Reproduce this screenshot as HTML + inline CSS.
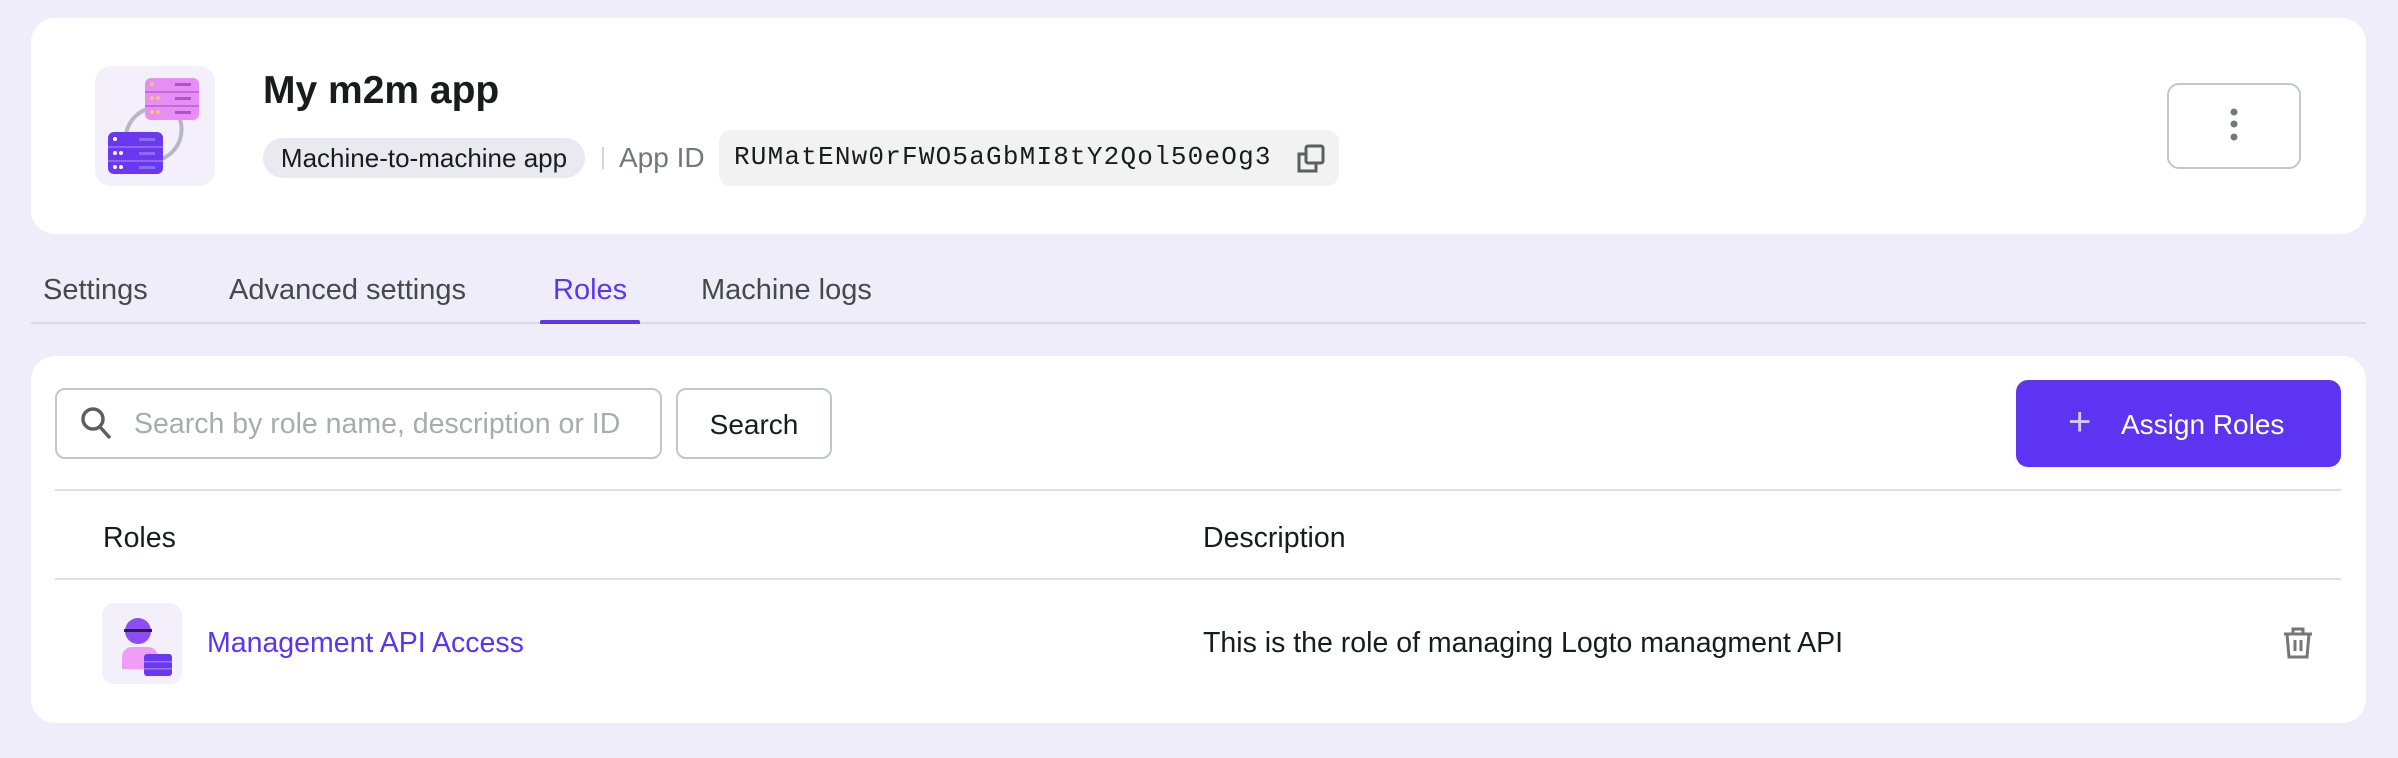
<!DOCTYPE html>
<html><head><meta charset="utf-8"><style>
*{box-sizing:border-box;margin:0;padding:0}
body{width:2398px;height:758px;background:#efedf9;font-family:"Liberation Sans",sans-serif;position:relative;overflow:hidden;color:#191c1d}
.abs{position:absolute;white-space:nowrap}
.card{position:absolute;background:#fff;border-radius:24px}
</style></head><body>
<div class="card" style="left:31px;top:18px;width:2335px;height:216px"></div>
<svg class="abs" style="left:95px;top:66px" width="120" height="120" viewBox="0 0 120 120">
<rect x="0" y="0" width="120" height="120" rx="16" fill="#f3f0fb"/>
<path d="M40 96 A32 32 0 0 1 56 42" stroke="#b9b6c6" stroke-width="4" fill="none"/>
<path d="M80 44 A32 32 0 0 1 64 94" stroke="#b9b6c6" stroke-width="4" fill="none"/>
<rect x="50" y="12" width="54" height="42" rx="6" fill="#e78ef5"/>
<rect x="50" y="25" width="54" height="2" fill="#c768db"/><rect x="50" y="39" width="54" height="2" fill="#c768db"/>
<rect x="80" y="17" width="16" height="3" fill="#b64fcc"/><rect x="80" y="31" width="16" height="3" fill="#b64fcc"/><rect x="80" y="45" width="16" height="3" fill="#b64fcc"/>
<circle cx="57" cy="18" r="2" fill="#f5c46d"/><circle cx="57" cy="32" r="2" fill="#f5c46d"/><circle cx="63" cy="32" r="2" fill="#f5c46d"/><circle cx="57" cy="46" r="2" fill="#f5c46d"/><circle cx="63" cy="46" r="2" fill="#f5c46d"/>
<rect x="13" y="66" width="55" height="42" rx="6" fill="#6a38f0"/>
<rect x="13" y="80" width="55" height="2" fill="#8e66f5"/><rect x="13" y="94" width="55" height="2" fill="#8e66f5"/>
<rect x="44" y="72" width="16" height="3" fill="#8a6cf5"/><rect x="44" y="86" width="16" height="3" fill="#8a6cf5"/><rect x="44" y="100" width="16" height="3" fill="#8a6cf5"/>
<circle cx="20" cy="73" r="2" fill="#fff"/><circle cx="20" cy="87" r="2" fill="#fff"/><circle cx="26" cy="87" r="2" fill="#fff"/><circle cx="20" cy="101" r="2" fill="#fff"/><circle cx="26" cy="101" r="2" fill="#fff"/>
</svg>
<div class="abs" style="left:263px;top:69px;font-size:39px;font-weight:700">My m2m app</div>
<div class="abs" style="left:263px;top:138px;width:322px;height:40px;border-radius:20px;background:#ebe9f0;font-size:26px;line-height:40px;text-align:center">Machine-to-machine app</div>
<div class="abs" style="left:602px;top:147px;width:2px;height:22px;background:#d5d3dc"></div>
<div class="abs" style="left:619px;top:142px;font-size:28px;color:#747778">App ID</div>
<div class="abs" style="left:719px;top:130px;width:620px;height:56px;border-radius:12px;background:#f1f2f1"></div>
<div class="abs" style="left:734px;top:142px;font-family:'Liberation Mono',monospace;font-size:26px;letter-spacing:1.2px">RUMatENw0rFWO5aGbMI8tY2Qol50eOg3</div>
<svg class="abs" style="left:1294px;top:143px" width="32" height="32" viewBox="0 0 32 32" fill="none" stroke="#5c5f60" stroke-width="3"><rect x="12" y="3" width="17" height="17" rx="2"/><path d="M12 11H5v17h17v-8"/></svg>
<div class="abs" style="left:2167px;top:83px;width:134px;height:86px;border:2px solid #c4c7c7;border-radius:12px"></div>
<svg class="abs" style="left:2226px;top:104px" width="16" height="40"><circle cx="8" cy="8" r="3.5" fill="#747778"/><circle cx="8" cy="20" r="3.5" fill="#747778"/><circle cx="8" cy="33" r="3.5" fill="#747778"/></svg>

<div class="abs" style="left:43px;top:274px;font-size:29px;color:#46494a">Settings</div>
<div class="abs" style="left:229px;top:274px;font-size:29px;color:#46494a">Advanced settings</div>
<div class="abs" style="left:553px;top:274px;font-size:29px;color:#5d34f2">Roles</div>
<div class="abs" style="left:701px;top:274px;font-size:29px;color:#46494a">Machine logs</div>
<div class="abs" style="left:31px;top:322px;width:2335px;height:2px;background:#d9d6ef"></div>
<div class="abs" style="left:540px;top:320px;width:100px;height:4px;border-radius:2px 2px 0 0;background:#5d34f2"></div>

<div class="card" style="left:31px;top:356px;width:2335px;height:367px"></div>
<div class="abs" style="left:55px;top:388px;width:607px;height:71px;border:2px solid #c4c7c7;border-radius:10px"></div>
<svg class="abs" style="left:80px;top:406px" width="34" height="36" viewBox="0 0 34 36" fill="none" stroke="#5c5f60" stroke-width="3.5"><circle cx="13" cy="13" r="10"/><path d="M20 21l10 11"/></svg>
<div class="abs" style="left:134px;top:408px;font-size:28.5px;color:#a9acad">Search by role name, description or ID</div>
<div class="abs" style="left:676px;top:388px;width:156px;height:71px;border:2px solid #c4c7c7;border-radius:10px;font-size:28px;line-height:69px;text-align:center">Search</div>
<div class="abs" style="left:2016px;top:380px;width:325px;height:87px;border-radius:12px;background:#5d34f2;color:#fff;font-size:28px;line-height:89px"><span style="position:absolute;left:52px;top:-2px;font-size:40px;font-weight:300;color:#d4c9fb">+</span><span style="position:absolute;left:105px">Assign Roles</span></div>
<div class="abs" style="left:55px;top:489px;width:2286px;height:2px;background:#e0e0e0"></div>
<div class="abs" style="left:103px;top:522px;font-size:28.5px">Roles</div>
<div class="abs" style="left:1203px;top:522px;font-size:28.5px">Description</div>
<div class="abs" style="left:55px;top:578px;width:2286px;height:2px;background:#e0e0e0"></div>
<svg class="abs" style="left:102px;top:603px" width="80" height="81" viewBox="0 0 80 81">
<rect width="80" height="81" rx="12" fill="#f3f0fb"/>
<path d="M20 66v-12a10 10 0 0 1 10-10h16a10 10 0 0 1 10 10v12z" fill="#f19cf7"/>
<circle cx="36" cy="28" r="13" fill="#8e4df2"/>
<rect x="22" y="26" width="28" height="3" fill="#2a1f44"/>
<rect x="42" y="51" width="28" height="22" rx="3" fill="#6a38f0"/>
<rect x="42" y="58" width="28" height="1.5" fill="#9a7af7"/><rect x="42" y="65" width="28" height="1.5" fill="#9a7af7"/>
</svg>
<div class="abs" style="left:207px;top:627px;font-size:28.5px;color:#5d34f2">Management API Access</div>
<div class="abs" style="left:1203px;top:627px;font-size:28.5px">This is the role of managing Logto managment API</div>
<svg class="abs" style="left:2282px;top:626px" width="32" height="34" viewBox="0 0 32 34" fill="none" stroke="#747778" stroke-width="3"><path d="M2 8h28M11 8V3h10v5M5 8l2 23h18l2-23M13 14v11M19 14v11"/></svg>
</body></html>
